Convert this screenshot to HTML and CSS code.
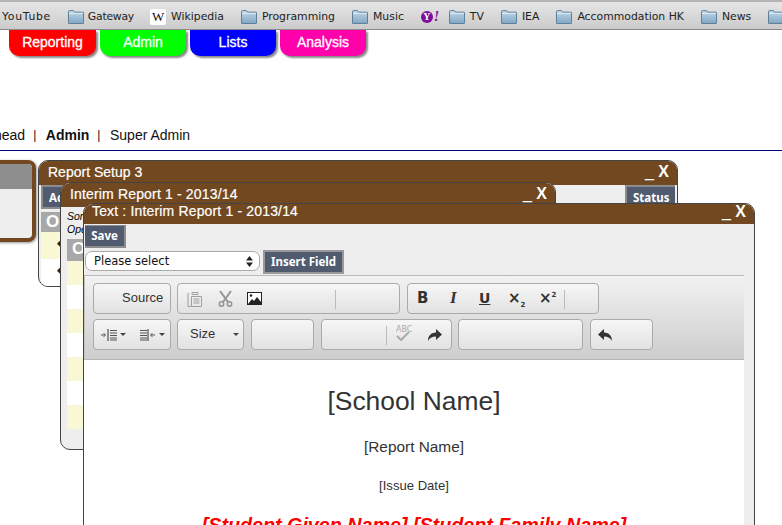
FILE: index.html
```html
<!DOCTYPE html>
<html lang="en">
<head>
<meta charset="utf-8">
<title>Interim Report</title>
<link rel="stylesheet" href="styles.css">
</head>
<body>
<svg class="defs" width="0" height="0" aria-hidden="true">
  <defs>
    <linearGradient id="fg" x1="0" y1="0" x2="0" y2="1"><stop offset="0" stop-color="#c3d8e6"/><stop offset="1" stop-color="#7fa7c6"/></linearGradient>
    <symbol id="folder" viewBox="0 0 16 14"><path d="M.5 13V1.600q0-1 1-1h3.600q.8 0 1.200 1l.3.6h8.400q.5 0 .5.6V13q0 .5-.5.5H1q-.5 0-.5-.5z" fill="url(#fg)" stroke="#5f7f99"/><path d="M1 3.400h14" stroke="#e3eef5"/></symbol>
  </defs>
</svg>

<nav class="bookmarks">
  <span class="bm bm-first">YouTube</span>
  <span class="bm bm-gate"><svg class="folder"><use href="#folder"/></svg>Gateway</span>
  <span class="bm"><span class="wiki">W</span>Wikipedia</span>
  <span class="bm"><svg class="folder"><use href="#folder"/></svg>Programming</span>
  <span class="bm"><svg class="folder"><use href="#folder"/></svg>Music</span>
  <span class="bm bm-yahoo"><span class="yahoo"><b>Y</b><i>!</i></span></span>
  <span class="bm"><svg class="folder"><use href="#folder"/></svg>TV</span>
  <span class="bm"><svg class="folder"><use href="#folder"/></svg>IEA</span>
  <span class="bm"><svg class="folder"><use href="#folder"/></svg>Accommodation HK</span>
  <span class="bm"><svg class="folder"><use href="#folder"/></svg>News</span>
  <span class="bm"><svg class="folder"><use href="#folder"/></svg></span>
</nav>

<div class="tabs">
  <a class="tab tab-red">Reporting</a>
  <a class="tab tab-green">Admin</a>
  <a class="tab tab-blue">Lists</a>
  <a class="tab tab-pink">Analysis</a>
</div>

<div class="subnav">
  <span class="clip">head</span><span class="sep">|</span><strong>Admin</strong><span class="sep">|</span><span>Super Admin</span>
</div>

<section class="win win-back">
  <div class="back-head"></div>
</section>

<section class="win win-setup">
  <header class="titlebar"><span class="title">Report Setup 3</span><span class="ctrl"><span>_</span> <span>X</span></span></header>
  <div class="setup-actions">
    <span class="dark-btn">Actions</span>
    <span class="dark-btn">Status</span>
  </div>
  <div class="thead setup-thead">Or</div>
  <div class="row yellow setup-row"><i class="diamond">◆</i></div>
  <div class="row setup-row"><i class="diamond">◆</i></div>
</section>

<section class="win win-interim">
  <header class="titlebar"><span class="title wide">Interim Report 1 - 2013/14</span><span class="ctrl"><span>_</span> <span>X</span></span></header>
  <p class="note">Some text<br>Open</p>
  <div class="thead interim-thead">Or</div>
  <div class="row yellow"></div>
  <div class="row"></div>
  <div class="row yellow"></div>
  <div class="row"></div>
  <div class="row yellow"></div>
  <div class="row"></div>
  <div class="row yellow"></div>
</section>

<section class="win win-text">
  <header class="titlebar text-bar"><span class="title wide">Text : Interim Report 1 - 2013/14</span><span class="ctrl"><span>_</span> <span>X</span></span></header>
  <div class="save-line"><span class="dark-btn save">Save</span></div>
  <div class="field-line">
    <div class="select"><span>Please select</span>
      <svg width="7" height="11" viewBox="0 0 7 11"><path d="M3.500 0 7 4.400H0zM3.500 11 0 6.600h7z" fill="#222"/></svg>
    </div>
    <span class="dark-btn insert">Insert Field</span>
  </div>
  <div class="editor">
    <div class="toolbar">
      <div class="tb-row">
        <div class="grp g-source"><span class="tb-text source">Source</span></div>
        <div class="grp g-clip">
          <svg class="ic faded" width="16" height="18" viewBox="0 0 16 18"><path d="M2 3.500H1v13h3M5 2.500h6v2H5zM4.500 6.500h10v10h-10z" fill="none" stroke="#888"/><path d="M6.500 9h6M6.500 11h6M6.500 13h6" stroke="#888"/></svg>
          <svg class="ic faded" width="15" height="17" viewBox="0 0 15 17"><path d="M2 1l8 11M13 1 5 12" stroke="#777" stroke-width="2" fill="none"/><circle cx="3.500" cy="14" r="2.200" fill="none" stroke="#777" stroke-width="1.500"/><circle cx="11.500" cy="14" r="2.200" fill="none" stroke="#777" stroke-width="1.500"/></svg>
          <svg class="ic ic-image" width="15" height="13" viewBox="0 0 15 13"><rect x=".5" y=".5" width="14" height="12" fill="#fff" stroke="#222"/><circle cx="4" cy="3.500" r="1.300" fill="#222"/><path d="M1 12 5 7l2 2 3-4 4 5v2z" fill="#222"/></svg>
          <i class="tb-sep clip-sep"></i>
        </div>
        <div class="grp g-style">
          <span class="st st-b">B</span><span class="st st-i">I</span><span class="st st-u">U</span>
          <span class="st st-x">×<sub>2</sub></span><span class="st st-x">×<sup>2</sup></span>
          <i class="tb-sep style-sep"></i>
        </div>
      </div>
      <div class="tb-row">
        <div class="grp g-source g-indent">
          <svg width="16" height="12" viewBox="0 0 16 12"><path d="M7 0v12" stroke="#333"/><path d="M9 1.500h7M9 4h7M9 6.500h7M9 9h7M9 11h7" stroke="#555"/><path d="M0 6h4M2.500 4l2 2-2 2" stroke="#555" fill="none"/></svg><i class="caret"></i>
          <svg class="ind2" width="16" height="12" viewBox="0 0 16 12"><path d="M8 0v12" stroke="#333"/><path d="M0 1.500h7M0 4h7M0 6.500h7M0 9h7M0 11h7" stroke="#555"/><path d="M15 6h-4M12.500 4l-2 2 2 2" stroke="#555" fill="none"/></svg><i class="caret"></i>
        </div>
        <div class="grp g-size"><span class="tb-text">Size</span><i class="caret size-caret"></i></div>
        <div class="grp g-empty1"></div>
        <div class="grp g-spell">
          <i class="tb-sep spell-sep"></i>
          <span class="abc">ABC<svg width="14" height="9" viewBox="0 0 14 9"><path d="M1 4l4 4 8-8" stroke="#aaa" stroke-width="2" fill="none"/></svg></span>
          <svg class="redo" width="15" height="12" viewBox="0 0 15 12"><path d="M9 0l6 5.500L9 11V7.500C5 7.500 2.500 9 1 12 1 7 4 3.500 9 3.500z" fill="#333"/></svg>
        </div>
        <div class="grp g-empty2"></div>
        <div class="grp g-undo">
          <svg width="15" height="12" viewBox="0 0 15 12"><path d="M6 0 0 5.500 6 11V7.500c4 0 6.500 1.500 8 4.500 0-5-3-8.500-8-8.500z" fill="#333"/></svg>
        </div>
      </div>
    </div>
    <div class="doc">
      <h1>[School Name]</h1>
      <p class="d-report">[Report Name]</p>
      <p class="d-date">[Issue Date]</p>
      <p class="d-student">[Student Given Name] [Student Family Name]</p>
    </div>
  </div>
</section>
</body>
</html>
```
FILE: styles.css
```css
* { box-sizing: border-box; }
html, body { margin: 0; height: 525px; overflow: hidden; background: #fff; }
body { position: relative; width: 782px; font-family: "Liberation Sans", Arial, sans-serif; color: #000; }
.defs { position: absolute; }

.bookmarks {
  display: flex; align-items: center; height: 30px; padding: 2px 0 0 2px; white-space: nowrap; overflow: hidden;
  background: linear-gradient(#e6e6e6, #cbcbcb);
  border-top: 2px solid #b4b4b4; border-bottom: 1px solid #8a8a8a;
  font: 10.850px "DejaVu Sans", sans-serif; color: #222;
}
.bm { display: flex; align-items: center; gap: 5px; margin-right: 17px; flex: none; }
.bm-first { letter-spacing: .68px; }
.bm-gate { gap: 4px; margin-right: 16px; letter-spacing: -.25px; }
.bm-yahoo { margin-right: 12px; }
.folder { width: 16px; height: 14px; display: block; }
.wiki {
  width: 16px; height: 16px; background: #fff; border-radius: 2px; text-align: center;
  font: 13px/16px "Liberation Serif", serif; color: #111;
}
.yahoo { display: flex; width: 16px; height: 13px; align-items: center; color: #7b0f99; font: bold 11px/13px "Liberation Serif", serif; }
.yahoo b { flex: none; width: 12px; height: 12px; border-radius: 50%; background: #7b0f99; color: #fff; font-size: 10px; line-height: 12px; text-align: center; }
.yahoo i { font-size: 14px; font-style: italic; margin-left: 1px; }

.tabs { display: flex; gap: 4px; padding-left: 9px; height: 27px; }
.tab {
  width: 86px; height: 26px; border-radius: 0 0 10px 10px; color: #fff; text-align: center;
  font-size: 14px; line-height: 25px; box-shadow: 2px 2px 2px #888; -webkit-text-stroke: .3px #fff;
}
.tab-red { background: #f00; width: 87px; }
.tab-green { background: #0f0; }
.tab-blue { background: #00f; }
.tab-pink { background: #f0a; }

.subnav {
  display: flex; align-items: center; height: 25px; margin-top: 65px; margin-left: -6px;
  font-size: 14px; color: #111;
}
.sep { margin: 0 9.500px 0 8px; font-size: 12px; }
.subnav strong { font-weight: bold; }
.subnav::after { content: ""; position: absolute; left: 0; right: 0; top: 150px; border-top: 1px solid #00007a; }

.win { position: absolute; background: #eee; border: 1px solid #444; border-radius: 10px; overflow: hidden; }
.win-back { left: -20px; top: 160px; width: 56px; height: 82px; border: 4px solid #714820; border-radius: 8px; box-shadow: 1px 1px 3px #999; }
.back-head { height: 25px; background: #8e8e8e; }
.win-setup { left: 38px; top: 160px; width: 640px; height: 127px; }
.win-interim { left: 60px; top: 182px; width: 496px; height: 268px; }
.win-text { left: 83px; top: 203px; width: 672px; height: 340px; border-radius: 10px 10px 0 0; }

.titlebar {
  display: flex; justify-content: space-between; background: #714820; color: #fff; height: 24px;
  padding: 0 8px 0 9px; font-size: 14px; line-height: 23px;
}
.title { -webkit-text-stroke: .2px #fff; }
.wide { letter-spacing: .16px; }
.ctrl { font-size: 16px; line-height: 21px; font-weight: bold; }
.ctrl span:first-child { font-weight: normal; }
.text-bar { height: 20px; padding-left: 8px; padding-right: 8px; }
.text-bar .ctrl { line-height: 15px; }
.text-bar .title { line-height: 15px; }

.dark-btn {
  display: inline-block; background: #505b70; color: #fff; border: 2px solid #8c8c8c; border-width: 2px 0 2px 2px;
  font: bold 11.500px/20px "Noto Sans", sans-serif; padding: 0 4px;
}
.setup-actions { display: flex; justify-content: space-between; padding: 0 2px; height: 27px; }
.setup-actions .dark-btn { height: 24px; width: 50px; padding: 0 0 0 6px; line-height: 21px; }
.thead { background: #a8a8a8; color: #fff; font: bold 17px/20px "Liberation Sans", sans-serif; padding-left: 5px; height: 20px; }
.setup-thead { margin: 0 2px; }
.row { height: 24px; background: #fff; position: relative; margin: 0 2px; }
.setup-row { height: 27px; }
.win-interim .row { margin: 0 6px; }
.interim-thead { margin: 0 6px; height: 22px; }
.yellow { background: #f8f8d4; }
.diamond { position: absolute; left: 16px; top: 5px; font: normal 9px/12px "DejaVu Sans", sans-serif; color: #222; }
.note { margin: 3px 0 2px 6px; font: italic 10.500px/13px "Liberation Sans", sans-serif; height: 27px; }

.save-line { padding: 1px 0 2px 1px; height: 26px; }
.save { height: 23px; width: 41px; text-align: center; padding: 0; line-height: 20px; border-width: 1px 2px 2px 0; }
.field-line { display: flex; align-items: center; gap: 3px; padding-left: 1px; height: 24px; }
.select {
  display: flex; align-items: center; justify-content: space-between; width: 175px; height: 20px; margin-bottom: 2px;
  background: #fff; border: 1px solid #aaa; border-radius: 7px; padding: 0 6px 0 8px;
  font: 11.500px "DejaVu Sans", sans-serif; color: #111;
}
.insert { width: 81px; height: 24px; padding: 0; text-align: center; line-height: 20px; border: 2px solid #999; }

.editor { margin: 1px 10px 0 0; background: #fff; border-top: 1px solid #bbb; }
.toolbar {
  display: flex; flex-direction: column; gap: 5px; height: 84px; padding: 7px 0 0 9px;
  background: linear-gradient(#f2f2f2, #cdcdcd); border-bottom: 1px solid #b5b5b5; box-shadow: inset 1px 0 #c4c4c4;
}
.tb-row { display: flex; gap: 6px; }
.grp {
  position: relative; display: flex; align-items: center; height: 31px; border: 1px solid #aaa; border-radius: 4px;
  background: linear-gradient(#f6f6f6, #e2e2e2); flex: none;
}
.g-source { width: 78px; }
.g-clip { width: 223px; padding-left: 9px; gap: 15px; }
.ic-image { margin-left: -1px; }
.g-style { width: 192px; margin-left: 1px; }
.g-size { width: 67px; padding-left: 12px; }
.g-empty1 { width: 63px; margin-left: 1px; }
.g-spell { width: 131px; margin-left: 1px; }
.g-empty2 { width: 125px; }
.g-undo { width: 63px; margin-left: 1px; padding-left: 7px; }
.g-indent { padding-left: 7px; }
.ind2 { margin-left: 14px; }
.tb-text { font-size: 13px; color: #333; margin-top: -3px; }
.source { margin-left: 28px; }
.faded { opacity: .75; }
.tb-sep { position: absolute; top: 6px; height: 19px; width: 1px; background: #bbb; }
.clip-sep { left: 157px; }
.style-sep { left: 156px; }
.spell-sep { left: 64px; }
.caret { width: 0; height: 0; border: 3px solid transparent; border-top-color: #444; border-bottom: 0; margin-left: 3px; }
.size-caret { margin-left: 18px; }
.st { color: #333; font: bold 14px/16px "DejaVu Sans", sans-serif; position: absolute; top: 6px; }
.st-b { left: 9px; font-size: 15px; }
.st-i { left: 42px; font-family: "Liberation Serif", serif; font-style: italic; font-size: 17px; }
.st-u { left: 71px; text-decoration: underline; font-size: 14px; font-weight: bold; }
.st-x { left: 100px; font-size: 15px; }
.st-x + .st-x { left: 131px; }
.st sub, .st sup { font-size: 7px; line-height: 0; }
.abc { position: absolute; left: 74px; top: 6px; font: 8px/8px "DejaVu Sans", sans-serif; color: #aaa; width: 16px; }
.abc svg { display: block; margin-top: -2px; }
.redo { position: absolute; left: 105px; top: 9px; }

.doc { text-align: center; color: #333; padding-top: 26px; height: 170px; overflow: hidden; }
.doc h1 { margin: 0; font-size: 26.400px; line-height: 31px; font-weight: normal; }
.d-report { margin: 21px 0 0; font-size: 15.400px; line-height: 18px; }
.d-date { margin: 22px 0 0; font-size: 13.100px; line-height: 15px; }
.d-student { margin: 21px 0 0; font-size: 19.700px; line-height: 23px; font-weight: bold; font-style: italic; color: #f00; }
```
